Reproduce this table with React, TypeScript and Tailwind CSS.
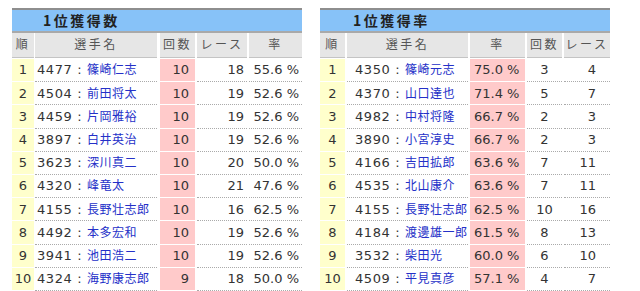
import React from 'react';

type Col = {
  label: string;
  w: string;
  ml: string;
  bg?: 'rank' | 'hit';
  align: string;
};

type Row = { no: number; id: string; name: string; vals: string[] };

const leftCols: Col[] = [
  { label: '順', w: 'w-[22px]', ml: 'ml-0', bg: 'rank', align: 'justify-center' },
  { label: '選手名', w: 'w-[122px]', ml: 'ml-px', align: 'justify-start pl-[2px]' },
  { label: '回数', w: 'w-[35px]', ml: 'ml-[3px]', bg: 'hit', align: 'justify-end pr-[6px]' },
  { label: 'レース', w: 'w-[50px]', ml: 'ml-[2px]', align: 'justify-end pr-[3px]' },
  { label: '率', w: 'w-[53px]', ml: 'ml-[2px]', align: 'justify-end pr-[3px]' },
];

const rightCols: Col[] = [
  { label: '順', w: 'w-[25px]', ml: 'ml-0', bg: 'rank', align: 'justify-center' },
  { label: '選手名', w: 'w-[121px]', ml: 'ml-[2px]', align: 'justify-start pl-[8px]' },
  { label: '率', w: 'w-[55px]', ml: 'ml-[2px]', bg: 'hit', align: 'justify-start pl-[4px]' },
  { label: '回数', w: 'w-[35px]', ml: 'ml-[2px]', align: 'justify-center' },
  { label: 'レース', w: 'w-[46px]', ml: 'ml-[2px]', align: 'justify-end pr-[14px]' },
];

const leftRows: Row[] = [
  { no: 1, id: '4477', name: '篠崎仁志', vals: ['10', '18', '55.6 %'] },
  { no: 2, id: '4504', name: '前田将太', vals: ['10', '19', '52.6 %'] },
  { no: 3, id: '4459', name: '片岡雅裕', vals: ['10', '19', '52.6 %'] },
  { no: 4, id: '3897', name: '白井英治', vals: ['10', '19', '52.6 %'] },
  { no: 5, id: '3623', name: '深川真二', vals: ['10', '20', '50.0 %'] },
  { no: 6, id: '4320', name: '峰竜太', vals: ['10', '21', '47.6 %'] },
  { no: 7, id: '4155', name: '長野壮志郎', vals: ['10', '16', '62.5 %'] },
  { no: 8, id: '4492', name: '本多宏和', vals: ['10', '19', '52.6 %'] },
  { no: 9, id: '3941', name: '池田浩二', vals: ['10', '19', '52.6 %'] },
  { no: 10, id: '4324', name: '海野康志郎', vals: ['9', '18', '50.0 %'] },
];

const rightRows: Row[] = [
  { no: 1, id: '4350', name: '篠崎元志', vals: ['75.0 %', '3', '4'] },
  { no: 2, id: '4370', name: '山口達也', vals: ['71.4 %', '5', '7'] },
  { no: 3, id: '4982', name: '中村将隆', vals: ['66.7 %', '2', '3'] },
  { no: 4, id: '3890', name: '小宮淳史', vals: ['66.7 %', '2', '3'] },
  { no: 5, id: '4166', name: '吉田拡郎', vals: ['63.6 %', '7', '11'] },
  { no: 6, id: '4535', name: '北山康介', vals: ['63.6 %', '7', '11'] },
  { no: 7, id: '4155', name: '長野壮志郎', vals: ['62.5 %', '10', '16'] },
  { no: 8, id: '4184', name: '渡邊雄一郎', vals: ['61.5 %', '8', '13'] },
  { no: 9, id: '3532', name: '柴田光', vals: ['60.0 %', '6', '10'] },
  { no: 10, id: '4509', name: '平見真彦', vals: ['57.1 %', '4', '7'] },
];

const font = "font-['DejaVu_Sans','Noto_Sans_CJK_JP',sans-serif]";

function cellBg(c: Col) {
  if (c.bg === 'rank') return 'bg-[#ffffcc] border-white border-solid';
  if (c.bg === 'hit') return 'bg-[#ffcaca] border-white border-solid';
  return 'bg-white border-[#aaaaaa] border-dotted';
}

function RankTable({ title, cols, rows, titlePad }: { title: string; cols: Col[]; rows: Row[]; titlePad: string }) {
  return (
    <div className="w-[290px] flex flex-col">
      <div className={`h-[25px] bg-[#87c2f8] border-t-2 border-b-2 border-t-[#8e8e8e] border-b-[#a9a9a9] flex items-center ${titlePad}`}>
        <span className="text-[14px] font-bold tracking-[2.5px] text-[#222] font-['Noto_Sans_CJK_JP',sans-serif]">{title}</span>
      </div>
      <div className="flex h-[25px] mb-px">
        {cols.map((c, i) => (
          <div
            key={i}
            className={`${c.w} ${c.ml} bg-[#e6e6e6] border-b border-[#c4c4c4] flex items-center justify-center text-[12px] tracking-[2.5px] text-[#555] ${font}`}
          >
            {c.label}
          </div>
        ))}
      </div>
      {rows.map((r) => (
        <div key={r.no} className="flex h-[23.25px]">
          {cols.map((c, i) => (
            <div
              key={i}
              className={`${c.w} ${c.ml} ${cellBg(c)} border-b flex items-center ${c.align} text-[13px] text-[#333] ${font} whitespace-nowrap`}
            >
              {i === 0 && r.no}
              {i === 1 && (
                <span>
                  <span className="tracking-[0.6px]">{`${r.id} : `}</span>
                  <span className="text-[12px] tracking-[0.5px] text-[#2430c8]">{r.name}</span>
                </span>
              )}
              {i > 1 && r.vals[i - 2]}
            </div>
          ))}
        </div>
      ))}
    </div>
  );
}

export default function App() {
  return (
    <div className="w-[640px] h-[291px] bg-white overflow-hidden flex pt-[8px] pl-[12px] gap-[18px]">
      <RankTable title="1位獲得数" cols={leftCols} rows={leftRows} titlePad="pl-[31px]" />
      <RankTable title="1位獲得率" cols={rightCols} rows={rightRows} titlePad="pl-[33px]" />
    </div>
  );
}
